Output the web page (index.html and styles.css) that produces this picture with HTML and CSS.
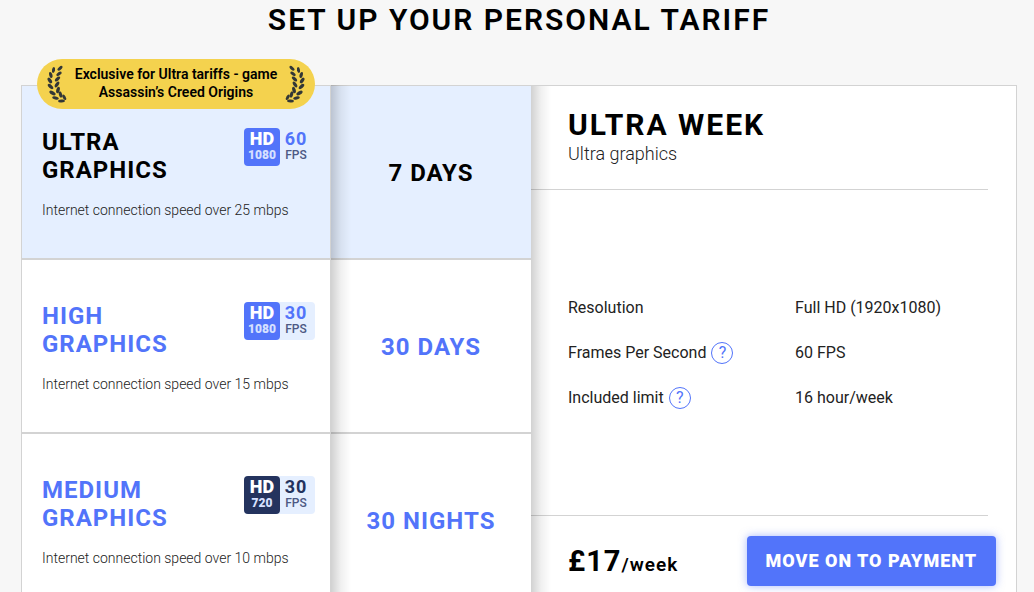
FILE: index.html
```html
<!DOCTYPE html>
<html lang="en">
<head>
<meta charset="utf-8">
<meta name="viewport" content="width=device-width, initial-scale=1">
<title>Set up your personal tariff</title>
<link rel="stylesheet" href="styles.css">
</head>
<body>
<svg class="defs" aria-hidden="true">
  <symbol id="laurel" viewBox="0 0 20 38">
    <g fill="#333736">
      <ellipse cx="13" cy="3.300" rx="3.100" ry="1.500" transform="rotate(-42 13 3.300)"/>
      <ellipse cx="6.500" cy="5" rx="3" ry="1.500" transform="rotate(-80 6.500 5)"/>
      <ellipse cx="12" cy="8.800" rx="3.100" ry="1.600" transform="rotate(-35 12 8.800)"/>
      <ellipse cx="3.800" cy="10" rx="3.100" ry="1.600" transform="rotate(75 3.800 10)"/>
      <ellipse cx="10.500" cy="14" rx="3.200" ry="1.600" transform="rotate(-42 10.500 14)"/>
      <ellipse cx="2.800" cy="15.500" rx="3.200" ry="1.700" transform="rotate(55 2.800 15.500)"/>
      <ellipse cx="10" cy="19.500" rx="3.300" ry="1.600" transform="rotate(-55 10 19.500)"/>
      <ellipse cx="3.500" cy="21.500" rx="3.400" ry="1.700" transform="rotate(42 3.500 21.500)"/>
      <ellipse cx="11" cy="25" rx="3.400" ry="1.700" transform="rotate(-75 11 25)"/>
      <ellipse cx="5.500" cy="28" rx="3.500" ry="1.700" transform="rotate(32 5.500 28)"/>
      <ellipse cx="13.500" cy="29.500" rx="3.200" ry="1.600" transform="rotate(75 13.500 29.500)"/>
      <ellipse cx="8.500" cy="33" rx="3.300" ry="1.600" transform="rotate(12 8.500 33)"/>
      <ellipse cx="17.200" cy="32.300" rx="3" ry="1.500" transform="rotate(60 17.200 32.300)"/>
      <ellipse cx="14.500" cy="36" rx="3.400" ry="1.500" transform="rotate(-5 14.500 36)"/>
    </g>
  </symbol>
</svg>
<main class="page">
  <h1 class="title">SET UP YOUR PERSONAL TARIFF</h1>
  <div class="tariff">
    <div class="column">
      <button type="button" class="cell plan selected">
        <span class="ribbon">
          <svg class="laurel"><use href="#laurel"/></svg>
          <span>Exclusive for Ultra tariffs - game<br>Assassin’s Creed Origins</span>
          <svg class="laurel flipped"><use href="#laurel"/></svg>
        </span>
        <span class="plan-head">
          <span class="plan-name">ULTRA<br>GRAPHICS</span>
          <span class="badge"><span class="res"><b>HD</b><small>1080</small></span><span class="fps"><b>60</b><small>FPS</small></span></span>
        </span>
        <span class="note">Internet connection speed over 25 mbps</span>
      </button>
      <button type="button" class="cell plan">
        <span class="plan-head">
          <span class="plan-name">HIGH<br>GRAPHICS</span>
          <span class="badge"><span class="res"><b>HD</b><small>1080</small></span><span class="fps"><b>30</b><small>FPS</small></span></span>
        </span>
        <span class="note">Internet connection speed over 15 mbps</span>
      </button>
      <button type="button" class="cell plan">
        <span class="plan-head">
          <span class="plan-name">MEDIUM<br>GRAPHICS</span>
          <span class="badge dark"><span class="res"><b>HD</b><small>720</small></span><span class="fps"><b>30</b><small>FPS</small></span></span>
        </span>
        <span class="note">Internet connection speed over 10 mbps</span>
      </button>
    </div>
    <div class="column shaded">
      <button type="button" class="cell period selected">7 DAYS</button>
      <button type="button" class="cell period">30 DAYS</button>
      <button type="button" class="cell period">30 NIGHTS</button>
    </div>
    <section class="summary shaded">
      <header class="summary-head">
        <h2 class="summary-title">ULTRA WEEK</h2>
        <p class="summary-sub">Ultra graphics</p>
      </header>
      <dl class="specs">
        <dt>Resolution</dt><dd>Full HD (1920x1080)</dd>
        <dt>Frames Per Second <button type="button" class="help" aria-label="About frames per second">?</button></dt><dd>60 FPS</dd>
        <dt>Included limit <button type="button" class="help" aria-label="About the included limit">?</button></dt><dd>16 hour/week</dd>
      </dl>
      <footer class="summary-foot">
        <p class="price">£17<span class="per">/week</span></p>
        <button type="button" class="pay">MOVE ON TO PAYMENT</button>
      </footer>
    </section>
  </div>
</main>
</body>
</html>
```

FILE: styles.css
```css
* {
  box-sizing: border-box;
}

body {
  margin: 0;
  background: #f7f7f7;
  color: #000;
  font-family: Roboto, "Liberation Sans", sans-serif;
}

button {
  font: inherit;
  color: inherit;
  cursor: pointer;
}

.defs {
  display: none;
}

.page {
  padding: 0 17px 0 21px;
}

.title {
  margin: 0 0 45px;
  font-size: 30px;
  font-weight: 600;
  line-height: 40px;
  letter-spacing: 2px;
  text-align: center;
}

.tariff {
  display: grid;
  grid-template-columns: 310fr 200fr 486fr;
}

.column {
  display: grid;
  grid-auto-rows: minmax(174px, auto);
}

.cell {
  border: 1px solid #d3d3d3;
  border-right-width: 0;
  border-radius: 0;
  background: #fff;
}

.plan {
  position: relative;
  display: flex;
  flex-direction: column;
  gap: 16px;
  padding: 42px 15px 20px 20px;
  border-right-width: 1px;
  text-align: left;
}

.period {
  padding: 2px 0 0;
  border-left-width: 0;
  color: #5274fa;
  font-size: 24px;
  font-weight: 700;
  letter-spacing: 1px;
}

.cell.selected {
  background: #e5efff;
  color: #000;
}

.ribbon {
  position: absolute;
  top: -27px;
  left: 15px;
  right: 15px;
  display: flex;
  justify-content: space-between;
  align-items: center;
  height: 50px;
  padding: 0 10px;
  border-radius: 25px;
  background: #f4d24e;
  font-size: 14px;
  font-weight: 600;
  line-height: 18px;
  text-align: center;
  white-space: nowrap;
}

.ribbon > span {
  padding-bottom: 2px;
}

.laurel {
  width: 20px;
  height: 38px;
}

.flipped {
  transform: scaleX(-1);
}

.plan-head {
  display: flex;
  justify-content: space-between;
  align-items: flex-start;
}

.plan-name {
  color: #5274fa;
  font-size: 24px;
  font-weight: 700;
  line-height: 28px;
  letter-spacing: 1px;
}

.selected .plan-name {
  color: #000;
}

.note {
  color: #222;
  font-size: 14px;
  font-weight: 300;
  line-height: 20px;
}

.badge {
  display: flex;
  border-radius: 4px;
  background: #e5efff;
  color: #5274fa;
}

.res,
.fps {
  display: flex;
  flex-direction: column;
  align-items: center;
  height: 38px;
  padding-top: 2px;
}

.res {
  width: 36px;
  border-radius: 4px;
  background: #5274fa;
  color: #fff;
}

.fps {
  width: 35px;
  padding-right: 3px;
}

.badge b {
  font-size: 18px;
  font-weight: 900;
  line-height: 18px;
}

.fps b {
  font-weight: 700;
  letter-spacing: 1px;
}

.badge small {
  font-size: 12px;
  line-height: 14px;
}

.res small {
  color: #d6e0ff;
  font-weight: 900;
}

.fps small {
  color: #4d5984;
  font-weight: 500;
}

.dark,
.dark .fps {
  color: #24335e;
}

.dark .res {
  background: #24335e;
}

.shaded {
  position: relative;
}

.shaded::before {
  content: "";
  position: absolute;
  inset: 0 auto 0 0;
  width: 20px;
  background: linear-gradient(to right, rgba(0, 0, 0, 0.18), rgba(0, 0, 0, 0.06) 50%, transparent);
  pointer-events: none;
}

.summary {
  display: flex;
  flex-direction: column;
  border: 1px solid #d3d3d3;
  border-left: 0;
  background: #fff;
}

.summary-head {
  margin-right: 28px;
  padding: 21px 0 25px 37px;
  border-bottom: 1px solid #d3d3d3;
}

.summary-title {
  margin: 0;
  font-size: 30px;
  font-weight: 700;
  line-height: 36px;
  letter-spacing: 2px;
}

.summary-sub {
  margin: 0;
  color: #222;
  font-size: 18px;
  font-weight: 300;
  line-height: 21px;
}

.specs {
  flex: 1;
  display: grid;
  grid-template-columns: 1fr 1fr;
  align-content: center;
  row-gap: 21px;
  margin: 0 0 0 37px;
  padding-right: 28px;
  color: #222;
  font-size: 16px;
  line-height: 24px;
}

.specs dt {
  display: flex;
  align-items: center;
  gap: 5px;
}

.specs dd {
  margin: 0 0 0 17px;
}

.help {
  width: 22px;
  height: 22px;
  padding: 0;
  border: 1px solid #5274fa;
  border-radius: 50%;
  background: none;
  color: #5274fa;
  line-height: 18px;
}

.summary-foot {
  display: flex;
  justify-content: space-between;
  align-items: center;
  margin-right: 28px;
  padding: 20px 0 20px 37px;
  border-top: 1px solid #d3d3d3;
}

.price {
  margin: 0;
  font-size: 29px;
  font-weight: 700;
  letter-spacing: 1px;
}

.per {
  font-size: 19px;
  font-weight: 600;
}

.pay {
  height: 50px;
  margin-right: -8px;
  padding: 0 19px 2px;
  border: 0;
  border-radius: 4px;
  background: #5274fa;
  box-shadow: 0 0 8px rgba(82, 116, 250, 0.5);
  color: #fff;
  font-size: 18px;
  font-weight: 900;
  letter-spacing: 1px;
  white-space: nowrap;
}
```
